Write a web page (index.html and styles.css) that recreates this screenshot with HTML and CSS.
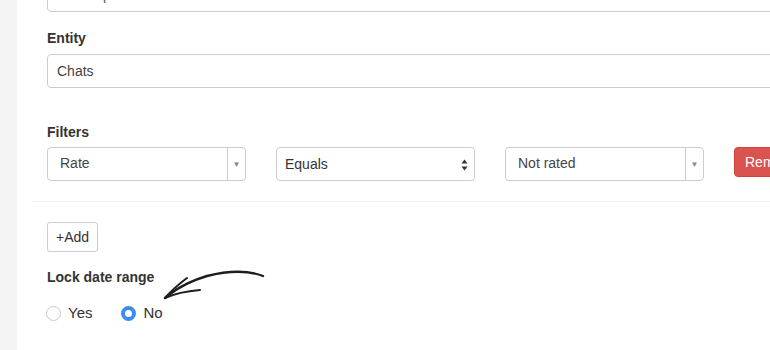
FILE: index.html
```html
<!DOCTYPE html>
<html>
<head>
<meta charset="utf-8">
<link rel="stylesheet" href="styles.css">
</head>
<body>
<div class="page">
  <aside class="gutter"></aside>
  <main class="main">
    <div class="section">
      <div class="field field-top">Chat report</div>
      <div class="label">Entity</div>
      <div class="field">Chats</div>
      <div class="label label-filters">Filters</div>
      <div class="filters">
        <div class="combo"><span class="combo-text">Rate</span><span class="combo-caret">&#9660;</span></div>
        <div class="select"><span>Equals</span>
          <svg class="updown" width="7" height="12" viewBox="0 0 7 12"><path d="M3.5 0.5 L6.5 4.5 L0.5 4.5 Z M3.5 11.5 L6.5 7.5 L0.5 7.5 Z" fill="#333"/></svg>
        </div>
        <div class="combo"><span class="combo-text">Not rated</span><span class="combo-caret">&#9660;</span></div>
        <button class="btn-danger">Remove</button>
      </div>
    </div>
    <div class="divider"></div>
    <div class="section">
      <button class="btn-add">+Add</button>
      <div class="label label-lock">Lock date range</div>
      <div class="radios">
        <label class="radio"><span class="dot"></span>Yes</label>
        <label class="radio"><span class="dot dot-on"></span>No</label>
      </div>
    </div>
    <svg class="arrow" width="120" height="40" viewBox="0 0 120 40">
      <path d="M111 14 C95 8 75 9 55 14 C38 19 26 26 18 32 L13 36" fill="none" stroke="#1e1e1e" stroke-width="2.4" stroke-linecap="round"/>
      <path d="M13 36 C19 29 27 22 35 16" fill="none" stroke="#1e1e1e" stroke-width="2" stroke-linecap="round"/>
      <path d="M13 36 C24 31 36 29 48 28" fill="none" stroke="#1e1e1e" stroke-width="2" stroke-linecap="round"/>
    </svg>
  </main>
</div>
</body>
</html>
```
FILE: styles.css
```css
* { box-sizing: border-box; }
html, body { margin: 0; padding: 0; }
body {
  font-family: "Liberation Sans", Arial, sans-serif;
  color: #333;
  background: #fff;
  overflow: hidden;
  width: 770px;
  height: 350px;
}
.page {
  display: flex;
  height: 350px;
}
.gutter {
  width: 17px;
  flex: 0 0 17px;
  background: #f4f4f4;
}
.main {
  position: relative;
  flex: 1;
  padding-left: 15px;
  min-width: 0;
}
.section {
  padding-left: 15px;
  display: flex;
  flex-direction: column;
  align-items: flex-start;
}
.field {
  width: 760px;
  height: 34px;
  border: 1px solid #ccc;
  border-radius: 4px;
  padding: 0 9px;
  font-size: 14px;
  line-height: 32px;
  color: #444;
}
.field-top {
  margin-top: -22px;
  color: #555;
}
.label {
  font-size: 14px;
  font-weight: bold;
  line-height: 20px;
  color: #333;
  margin-top: 16px;
  margin-bottom: 6px;
}
.label-filters {
  margin-top: 34px;
  margin-bottom: 5px;
}
.filters {
  display: flex;
  gap: 30px;
  align-items: flex-start;
}
.combo {
  width: 199px;
  height: 34px;
  border: 1px solid #ccc;
  border-radius: 4px;
  display: flex;
  font-size: 14px;
  color: #444;
}
.combo-text {
  flex: 1;
  padding-left: 12px;
  line-height: 30px;
}
.combo-caret {
  width: 18px;
  border-left: 1px solid #ccc;
  font-size: 8px;
  color: #888;
  display: flex;
  align-items: center;
  justify-content: center;
}
.select {
  width: 199px;
  height: 34px;
  border: 1px solid #ccc;
  border-radius: 4px;
  display: flex;
  align-items: center;
  justify-content: space-between;
  padding: 0 6px 0 8px;
  font-size: 14px;
  color: #333;
}
.updown { margin-top: 1px; }
.btn-danger {
  height: 30px;
  background: #d9534f;
  border: 1px solid #d43f3a;
  border-radius: 4px;
  color: #fff;
  font-family: inherit;
  font-size: 14px;
  padding: 0 10px;
  flex: 0 0 auto;
}
.divider {
  height: 1px;
  background: #eee;
  margin-top: 20px;
  margin-bottom: 20px;
}
.btn-add {
  height: 30px;
  width: 51px;
  background: #fff;
  border: 1px solid #ccc;
  border-radius: 3px;
  font-family: inherit;
  font-size: 14px;
  color: #333;
  padding: 0;
}
.label-lock {
  margin-top: 15px;
  margin-bottom: 16px;
}
.radios {
  display: flex;
  gap: 29px;
  font-size: 15px;
  line-height: 20px;
  margin-left: -1px;
}
.radio {
  display: flex;
  align-items: center;
  gap: 7px;
}
.dot {
  width: 15px;
  height: 15px;
  flex: 0 0 15px;
  border-radius: 50%;
  border: 1px solid #c8c8c8;
  background: #fff;
}
.dot-on {
  border: 4.5px solid #3b8df3;
  background: #fff;
}
.arrow {
  position: absolute;
  left: 135px;
  top: 262px;
}
```
